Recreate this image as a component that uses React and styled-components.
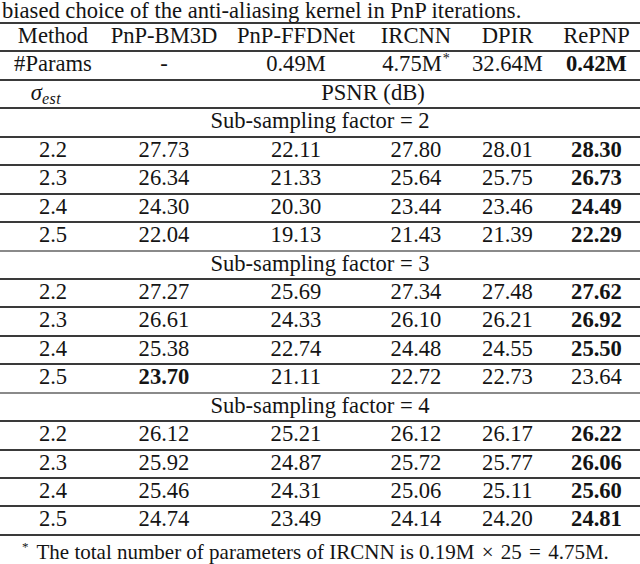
import React from "react";
import styled, { createGlobalStyle } from "styled-components";

const Global = createGlobalStyle`
  html, body { margin: 0; padding: 0; background: #fff; }
  body { width: 640px; height: 564px; overflow: hidden; }
`;

const Page = styled.div`
  width: 640px;
  font-family: "Liberation Serif", "Times New Roman", serif;
  font-size: 22.6px;
  color: #141414;
  background: #fff;
`;

const Caption = styled.div`
  height: 22px;
  padding-top: 1px;
  box-sizing: border-box;
  line-height: 19px;
  padding-left: 2px;
  white-space: nowrap;
`;

const Table = styled.div`
  border-top: 2px solid #3a3a3a;
  width: 640px;
`;

const Row = styled.div`
  display: grid;
  grid-template-columns: 106px 116px 148px 92px 91px 87px;
  height: 26.45px;
  line-height: 24px;
  border-bottom: 2px solid ${(p) => (p.$light ? "#8a8a8a" : "#3a3a3a")};
  white-space: nowrap;
`;

const Cell = styled.div`
  text-align: center;
  grid-column: ${(p) => (p.$span ? `span ${p.$span}` : "auto")};
  font-weight: ${(p) => (p.$bold ? 700 : 400)};
`;

const Sup = styled.sup`
  font-size: 14px;
  line-height: 0;
  vertical-align: 8px;
  margin-left: 1px;
`;

const Sigma = styled.span`
  font-style: italic;
  display: inline-block;
  margin-right: 14px;
`;

const Sub = styled.sub`
  font-size: 16px;
  font-style: italic;
  line-height: 0;
  vertical-align: -4px;
  letter-spacing: 0.5px;
`;

const Footnote = styled.div`
  font-size: 21px;
  line-height: 22px;
  padding: 5px 0 0 22px;
  white-space: nowrap;
`;

const FootMark = styled.span`
  font-size: 13px;
  vertical-align: 8px;
  line-height: 0;
  margin-right: 8px;
`;

const MathOp = styled.span`
  padding: 0 2px;
`;

const sections = [
  {
    factor: 2,
    rows: [
      ["2.2", "27.73", "22.11", "27.80", "28.01", "28.30", 5],
      ["2.3", "26.34", "21.33", "25.64", "25.75", "26.73", 5],
      ["2.4", "24.30", "20.30", "23.44", "23.46", "24.49", 5],
      ["2.5", "22.04", "19.13", "21.43", "21.39", "22.29", 5],
    ],
  },
  {
    factor: 3,
    rows: [
      ["2.2", "27.27", "25.69", "27.34", "27.48", "27.62", 5],
      ["2.3", "26.61", "24.33", "26.10", "26.21", "26.92", 5],
      ["2.4", "25.38", "22.74", "24.48", "24.55", "25.50", 5],
      ["2.5", "23.70", "21.11", "22.72", "22.73", "23.64", 1],
    ],
  },
  {
    factor: 4,
    rows: [
      ["2.2", "26.12", "25.21", "26.12", "26.17", "26.22", 5],
      ["2.3", "25.92", "24.87", "25.72", "25.77", "26.06", 5],
      ["2.4", "25.46", "24.31", "25.06", "25.11", "25.60", 5],
      ["2.5", "24.74", "23.49", "24.14", "24.20", "24.81", 5],
    ],
  },
];

export default function App() {
  return (
    <Page>
      <Global />
      <Caption>biased choice of the anti-aliasing kernel in PnP iterations.</Caption>
      <Table>
        <Row>
          <Cell>Method</Cell>
          <Cell>PnP-BM3D</Cell>
          <Cell>PnP-FFDNet</Cell>
          <Cell>IRCNN</Cell>
          <Cell>DPIR</Cell>
          <Cell>RePNP</Cell>
        </Row>
        <Row>
          <Cell>#Params</Cell>
          <Cell>-</Cell>
          <Cell>0.49M</Cell>
          <Cell>
            4.75M<Sup>*</Sup>
          </Cell>
          <Cell>32.64M</Cell>
          <Cell $bold>0.42M</Cell>
        </Row>
        <Row>
          <Cell>
            <Sigma>
              σ<Sub>est</Sub>
            </Sigma>
          </Cell>
          <Cell $span={5}>PSNR (dB)</Cell>
        </Row>
        {sections.map((s) => (
          <React.Fragment key={s.factor}>
            <Row>
              <Cell $span={6}>Sub-sampling factor = {s.factor}</Cell>
            </Row>
            {s.rows.map((r, i) => (
              <Row key={r[0]} $light={i === s.rows.length - 1 && s.factor !== 4}>
                {r.slice(0, 6).map((v, j) => (
                  <Cell key={j} $bold={j === r[6]}>
                    {v}
                  </Cell>
                ))}
              </Row>
            ))}
          </React.Fragment>
        ))}
      </Table>
      <Footnote>
        <FootMark>*</FootMark>The total number of parameters of IRCNN is 0.19M <MathOp>×</MathOp> 25 <MathOp>=</MathOp> 4.75M.
      </Footnote>
    </Page>
  );
}
